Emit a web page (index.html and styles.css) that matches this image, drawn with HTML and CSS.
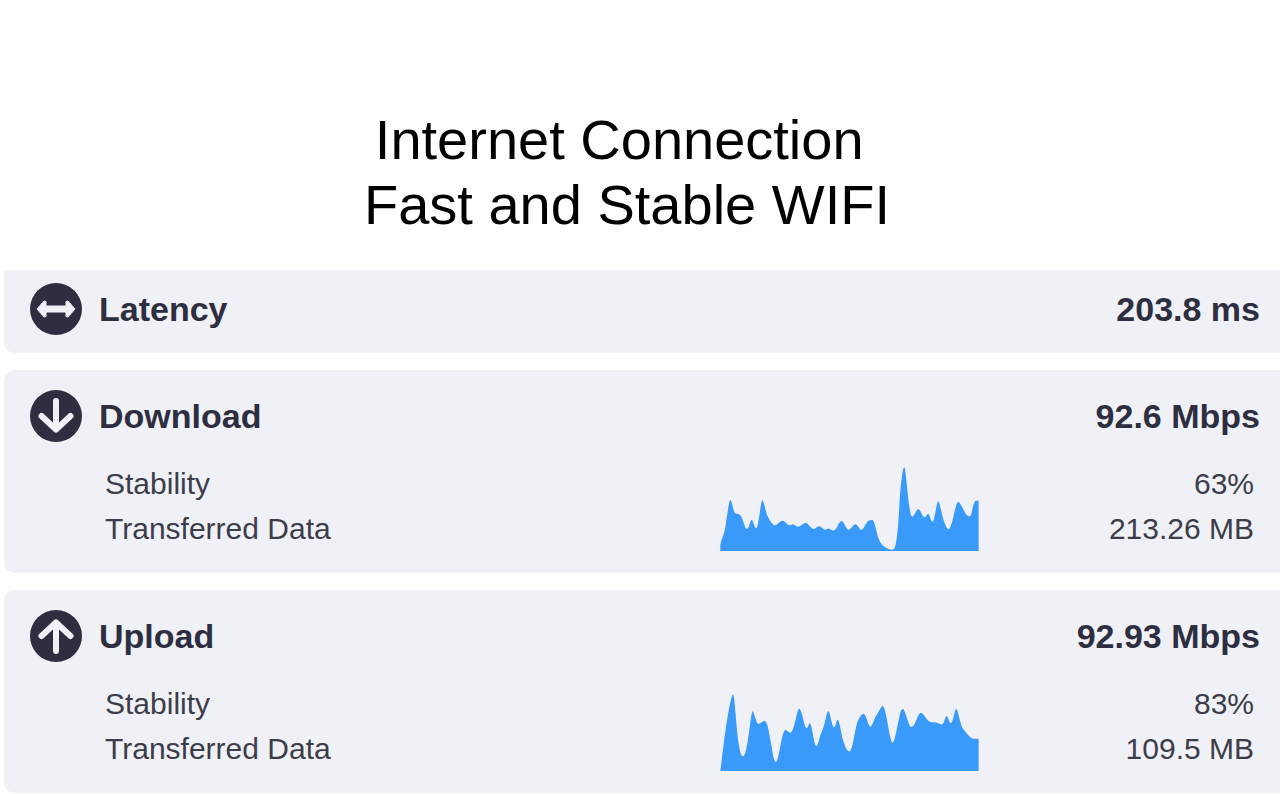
FILE: index.html
```html
<!DOCTYPE html>
<html lang="en">
<head>
    <meta charset="UTF-8">
    <meta name="viewport" content="width=device-width, initial-scale=1.0">
    <title>Internet Connection</title>
    <link rel="stylesheet" href="styles.css">
</head>
<body>
    <h1>Internet Connection&nbsp;<br>Fast and Stable WIFI</h1>

    <main class="results">
        <section class="card card-latency">
            <div class="card-header">
                <svg class="icon" viewBox="0 0 52 52" aria-hidden="true">
                    <circle cx="26" cy="26" r="26"/>
                    <path class="solid" d="M7 26L14 18L16 18.5V23H36V18.5L38 18L45 26L38 34L36 33.5V29H16V33.5L14 34Z"/>
                </svg>
                <h2>Latency</h2>
                <span class="speed">203.8 ms</span>
            </div>
        </section>

        <section class="card">
            <div class="card-header">
                <svg class="icon" viewBox="0 0 52 52" aria-hidden="true">
                    <circle cx="26" cy="26" r="26"/>
                    <path class="line" d="M26 11V39M11.5 26L26 39.5L40.5 26"/>
                </svg>
                <h2>Download</h2>
                <span class="speed">92.6 Mbps</span>
            </div>
            <table class="details">
                <tr>
                    <th scope="row">Stability</th>
                    <td class="chart-cell" rowspan="2">
                        <svg class="chart" viewBox="60 45 777 258" aria-hidden="true">
                            <path d="M61 303V284C66 262 72 256 76 232C81 200 87 150 91 150C96 150 99 184 106 190C112 192 118 192 123 198C130 210 134 236 141 237C148 236 150 210 155 210C160 212 163 234 169 235C176 232 182 151 187 151C192 152 197 188 204 201C211 213 218 226 225 226C233 225 238 212 247 212C256 212 262 226 269 226C273 226 276 222 280 223C285 225 288 230 294 230C303 230 308 219 317 219C326 220 332 237 341 237C348 236 352 228 359 229C366 231 369 239 376 239C380 239 383 235 387 236C392 238 396 242 402 241C411 240 416 213 425 213C433 214 438 240 446 239C455 238 460 222 467 223C474 225 478 240 484 240C491 239 497 219 504 213C509 210 513 210 518 210C527 218 529 260 544 281C552 291 558 293 568 298C574 300 579 299 583 296C591 284 595 220 598 170C602 100 608 52 613 52C618 52 626 195 636 200C644 200 648 178 655 178C663 180 667 203 674 202C679 200 681 190 685 191C690 195 692 215 698 215C705 208 710 154 715 154C719 155 727 202 734 219C738 230 742 238 747 238C757 232 766 158 774 156C783 157 791 184 800 195C804 199 807 200 811 198C817 190 818 158 827 152H836V303Z"/>
                        </svg>
                    </td>
                    <td>63%</td>
                </tr>
                <tr>
                    <th scope="row">Transferred Data</th>
                    <td>213.26 MB</td>
                </tr>
            </table>
        </section>

        <section class="card">
            <div class="card-header">
                <svg class="icon" viewBox="0 0 52 52" aria-hidden="true">
                    <circle cx="26" cy="26" r="26"/>
                    <path class="line" d="M26 41V13M11.5 26L26 12.5L40.5 26"/>
                </svg>
                <h2>Upload</h2>
                <span class="speed">92.93 Mbps</span>
            </div>
            <table class="details">
                <tr>
                    <th scope="row">Stability</th>
                    <td class="chart-cell" rowspan="2">
                        <svg class="chart" viewBox="60 14 777 258" aria-hidden="true">
                            <path d="M61 272C70 200 76 145 82 115C88 82 95 42 99 42C104 42 109 145 115 183C119 210 123 228 129 228C136 227 139 202 143 184C149 150 154 93 158 93C163 94 167 128 175 131C183 130 188 121 195 122C204 126 208 165 214 193C218 219 222 245 228 245C238 240 244 153 256 149C262 149 265 158 272 157C284 151 290 86 298 85C306 86 313 143 320 144C325 142 326 128 330 129C337 137 342 197 349 197C356 194 358 168 365 155C374 139 380 92 385 92C390 93 396 140 402 141C408 140 409 118 413 118C420 122 424 168 431 185C436 200 441 213 448 213C461 208 463 143 475 118C480 108 484 101 491 100C500 103 504 138 511 139C518 136 521 117 530 103C537 93 541 81 548 76C560 84 568 183 578 187C589 180 597 87 608 85C617 88 625 139 635 140C646 138 653 98 662 97C672 98 679 120 691 125C699 127 706 125 714 128C719 130 722 133 727 132C733 128 735 108 740 107C745 110 748 128 753 129C760 124 764 85 769 85C775 90 780 133 790 147C799 157 808 174 821 175C827 176 831 175 836 176V272Z"/>
                        </svg>
                    </td>
                    <td>83%</td>
                </tr>
                <tr>
                    <th scope="row">Transferred Data</th>
                    <td>109.5 MB</td>
                </tr>
            </table>
        </section>
    </main>
</body>
</html>
```
FILE: styles.css
```css
body {
    margin: 0;
    background: #fff;
    color: #2d2e40;
    font-family: "Liberation Sans", Arial, sans-serif;
}

h1 {
    margin: 0;
    padding: 107px 26px 33px 0;
    color: #000;
    font-size: 56px;
    font-weight: normal;
    line-height: 65px;
    text-align: center;
}

.results {
    display: flex;
    flex-direction: column;
    gap: 17px;
    margin-left: 4px;
}

.card {
    padding: 20px 20px 22px 26px;
    background: #f0f1f7;
    border-radius: 10px 0 0 10px;
}

.card-latency {
    padding-top: 13px;
    padding-bottom: 18px;
    border-top-left-radius: 0;
}

.card-header {
    display: flex;
    align-items: center;
    gap: 17px;
}

.card-header h2,
.speed {
    margin: 0;
    font-size: 34px;
    font-weight: bold;
    line-height: 52px;
}

.speed {
    margin-left: auto;
}

.icon {
    width: 52px;
    height: 52px;
    fill: #2f2e41;
}

.icon .solid {
    fill: #f0f1f7;
    stroke: #f0f1f7;
    stroke-linejoin: round;
}

.icon .line {
    fill: none;
    stroke: #f0f1f7;
    stroke-width: 6px;
    stroke-linecap: round;
    stroke-linejoin: round;
}

.details {
    width: 100%;
    margin-top: 19px;
    padding: 0 6px 0 75px;
    border-spacing: 0;
    color: #3c3d49;
    font-size: 30px;
    line-height: 45px;
}

.details th,
.details td {
    padding: 0;
    font-weight: normal;
}

.details th {
    text-align: left;
}

.details td {
    width: 275px;
    text-align: right;
}

.details .chart-cell {
    width: 259px;
    vertical-align: bottom;
}

.chart {
    display: block;
    width: 259px;
    height: 86px;
    fill: #3a9af9;
}
```
